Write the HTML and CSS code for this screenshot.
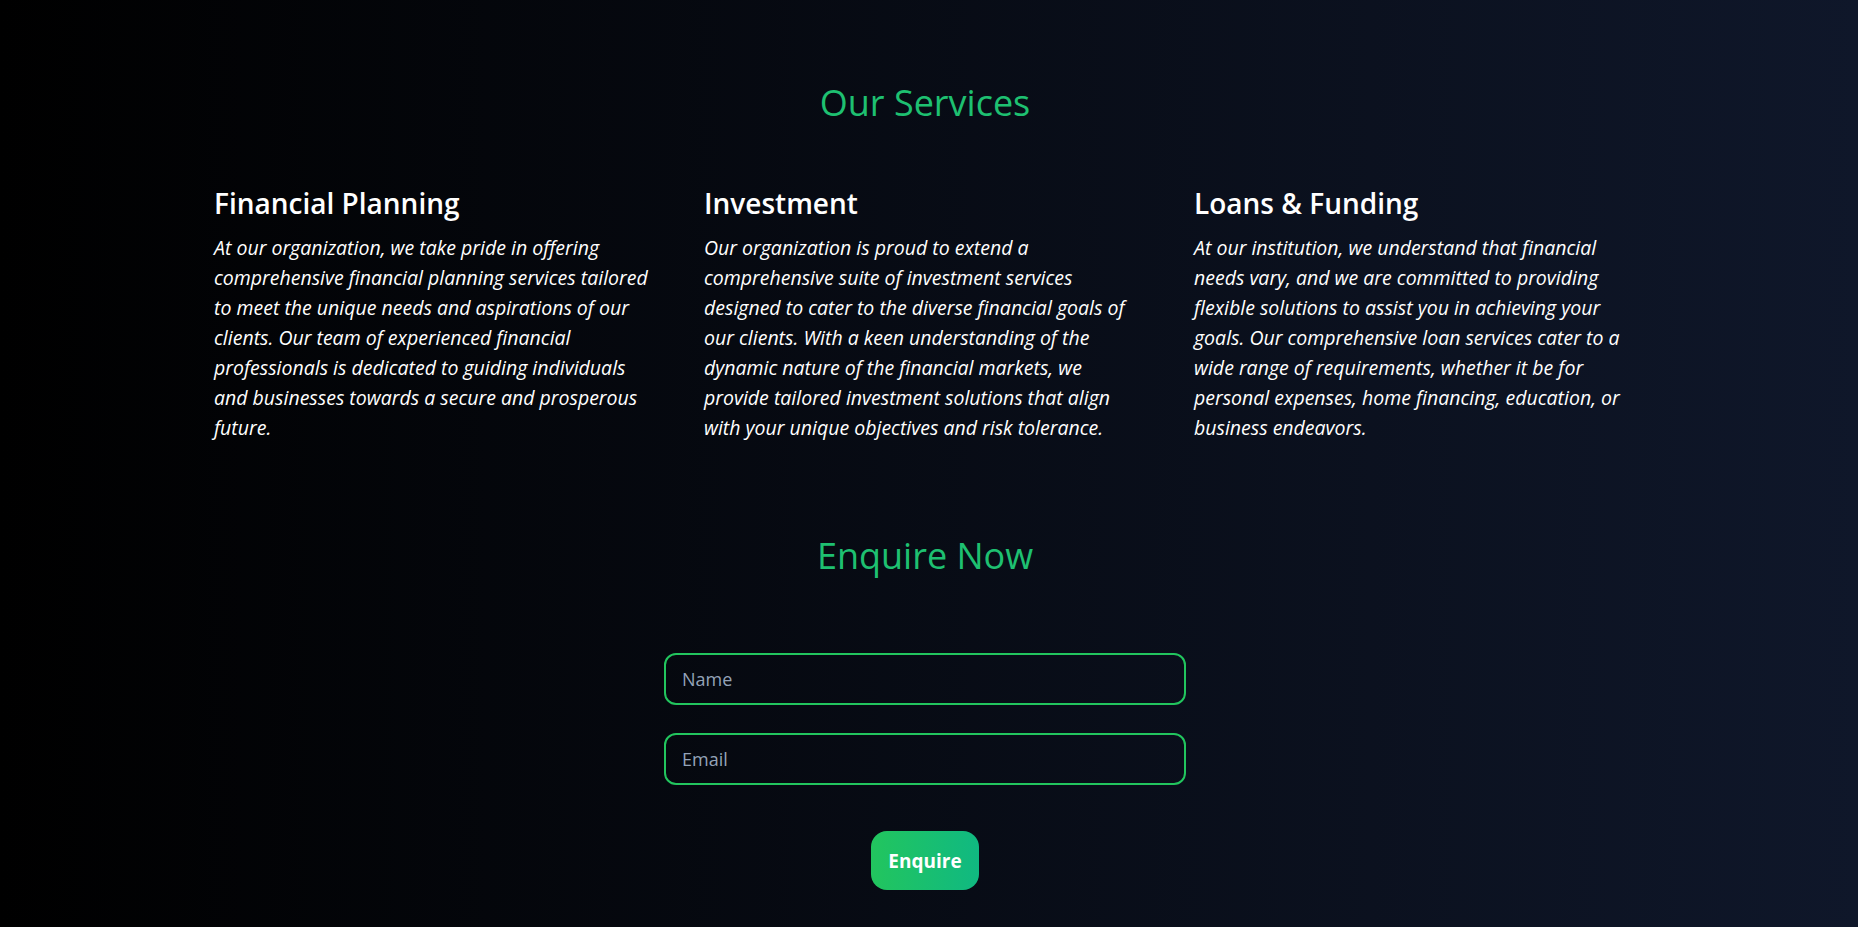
FILE: index.html
```html
<!DOCTYPE html>
<html lang="en">
<head>
<meta charset="utf-8">
<title>Our Services</title>
<link rel="stylesheet" href="styles.css">
</head>
<body>
<main class="page">
  <section class="services">
    <h2 class="section-title">Our Services</h2>
    <div class="service-grid">
      <article class="service">
        <h3 class="service-title">Financial Planning</h3>
        <p class="service-text">At our organization, we take pride in offering comprehensive financial planning services tailored to meet the unique needs and aspirations of our clients. Our team of experienced financial professionals is dedicated to guiding individuals and businesses towards a secure and prosperous future.</p>
      </article>
      <article class="service">
        <h3 class="service-title">Investment</h3>
        <p class="service-text">Our organization is proud to extend a comprehensive suite of investment services designed to cater to the diverse financial goals of our clients. With a keen understanding of the dynamic nature of the financial markets, we provide tailored investment solutions that align with your unique objectives and risk tolerance.</p>
      </article>
      <article class="service">
        <h3 class="service-title">Loans &amp; Funding</h3>
        <p class="service-text">At our institution, we understand that financial needs vary, and we are committed to providing flexible solutions to assist you in achieving your goals. Our comprehensive loan services cater to a wide range of requirements, whether it be for personal expenses, home financing, education, or business endeavors.</p>
      </article>
    </div>
  </section>
  <section class="enquire">
    <h2 class="section-title enquire-title">Enquire Now</h2>
    <form class="enquire-form">
      <input class="field" type="text" placeholder="Name">
      <input class="field" type="email" placeholder="Email">
      <button class="btn" type="button">Enquire</button>
    </form>
  </section>
</main>
</body>
</html>
```
FILE: styles.css
```css
* { box-sizing: border-box; }
html, body { margin: 0; padding: 0; }
body {
  min-height: 100vh;
  background: linear-gradient(to right, #000000, #0f172a);
  color: #ffffff;
  font-family: "Open Sans", "Noto Sans", sans-serif;
  overflow: hidden;
}
.page {
  padding: 83px 8px 0 0;
  display: flex;
  flex-direction: column;
  align-items: center;
}
.section-title {
  margin: 0;
  font-size: 36px;
  line-height: 40px;
  font-weight: 400;
  color: #1ec071;
  text-align: center;
}
.services {
  display: flex;
  flex-direction: column;
  align-items: center;
}
.service-grid {
  margin-top: 62px;
  display: grid;
  grid-template-columns: repeat(3, 442px);
  column-gap: 48px;
}
.service-title {
  margin: 0 0 12px;
  font-size: 28px;
  line-height: 36px;
  font-weight: 600;
}
.service-text {
  margin: 0;
  font-size: 19.5px;
  line-height: 30px;
  font-style: italic;
}
.enquire {
  margin-top: 93px;
  display: flex;
  flex-direction: column;
  align-items: center;
}
.enquire-form {
  margin-top: 77px;
  width: 522px;
  display: flex;
  flex-direction: column;
  align-items: center;
  gap: 28px;
}
.field {
  width: 100%;
  height: 52px;
  padding: 0 16px;
  border: 2px solid #22c55e;
  border-radius: 12px;
  background: transparent;
  color: #fff;
  font-family: "Open Sans", sans-serif;
  font-size: 18px;
  outline: none;
}
.field::placeholder { color: #94a3b8; }
.btn {
  margin-top: 18px;
  height: 59px;
  padding: 0 17px;
  border: 0;
  border-radius: 16px;
  background: linear-gradient(to right, #22c55e, #10b981);
  color: #fff;
  font-family: "Open Sans", sans-serif;
  font-size: 19px;
  font-weight: 700;
  cursor: pointer;
}
```
